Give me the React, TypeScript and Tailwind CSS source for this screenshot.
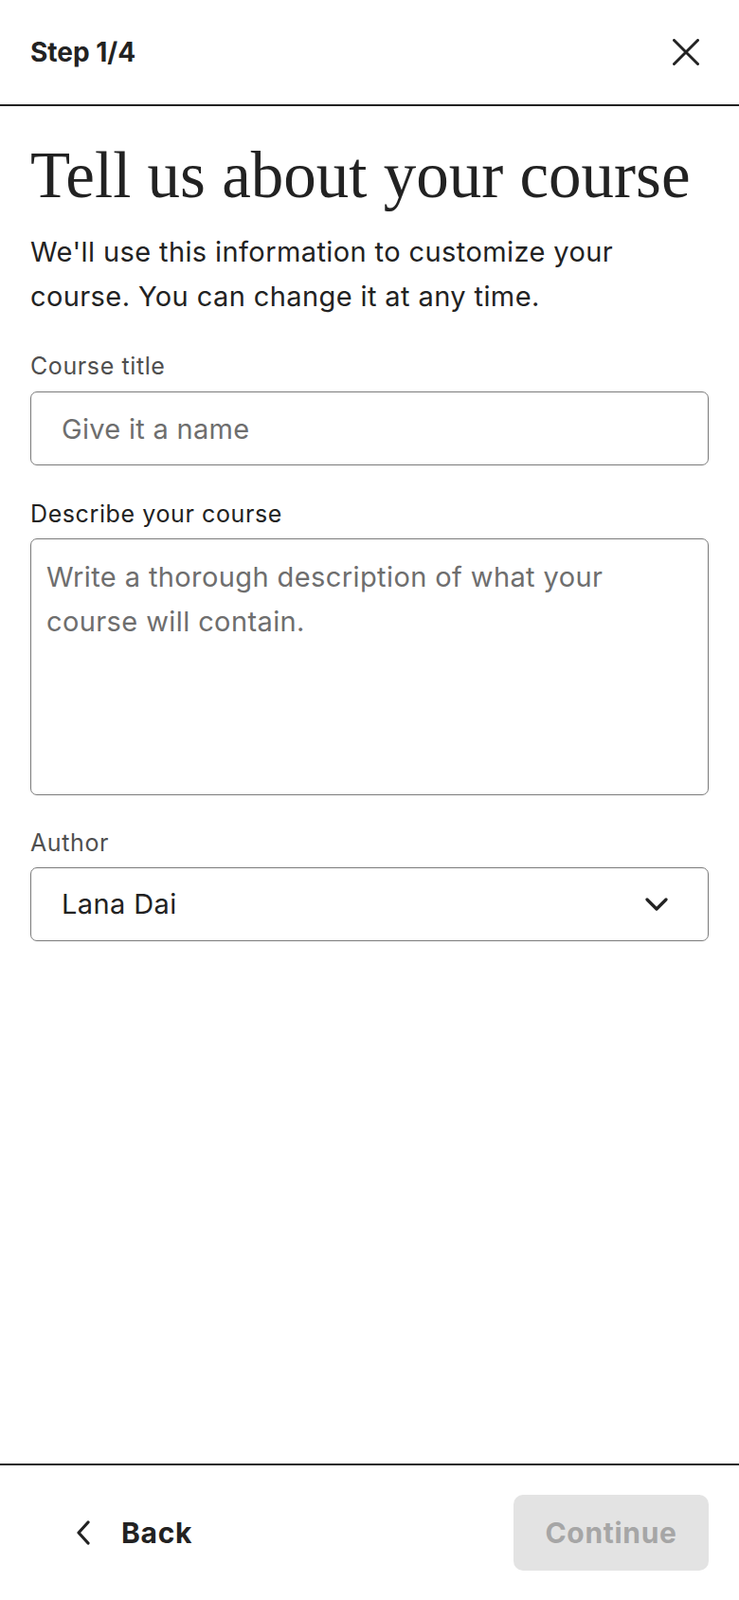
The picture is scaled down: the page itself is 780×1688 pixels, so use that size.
import { useState } from "react";

function CloseIcon() {
  return (
    <svg width="28" height="28" viewBox="0 0 28 28" fill="none" aria-hidden>
      <path d="M1.5 1.5L26.5 26.5M26.5 1.5L1.5 26.5" stroke="#222" strokeWidth="3" strokeLinecap="round" />
    </svg>
  );
}

function ChevronDown() {
  return (
    <svg width="24" height="14" viewBox="0 0 24 14" fill="none" aria-hidden>
      <path d="M2 2L12 12L22 2" stroke="#222" strokeWidth="3.2" strokeLinecap="round" strokeLinejoin="round" />
    </svg>
  );
}

function ChevronLeft() {
  return (
    <svg width="16" height="26" viewBox="0 0 16 26" fill="none" aria-hidden>
      <path d="M13 2L3 13L13 24" stroke="#222" strokeWidth="3.2" strokeLinecap="round" strokeLinejoin="round" />
    </svg>
  );
}

export default function App() {
  const [title, setTitle] = useState("");
  const [description, setDescription] = useState("");
  const [author, setAuthor] = useState("Lana Dai");

  const canContinue = title.trim().length > 0 && description.trim().length > 0;

  return (
    <div className="flex h-[1688px] flex-col bg-white font-[Inter,sans-serif] text-[#222]">
      {/* header */}
      <header className="flex h-[112px] shrink-0 items-center justify-between border-b-2 border-[#222] px-8">
        <span className="text-[28px] font-bold">Step 1/4</span>
        <button type="button" aria-label="Close" className="flex h-12 w-12 items-center justify-center">
          <CloseIcon />
        </button>
      </header>

      <main className="flex-1 px-8 pt-[35px]">
        <h1 className="font-['Liberation_Serif',serif] text-[69px] leading-[76px] font-normal">
          Tell us about your course
        </h1>
        <p className="mt-[19px] text-[29px] leading-[47px] tracking-[0.4px]">
          We'll use this information to customize your course. You can change it at any time.
        </p>

        <div className="mt-[34px]">
          <label htmlFor="course-title" className="mb-[11px] block text-[25px] leading-8 tracking-[0.6px] text-[#4f4f4f]">
            Course title
          </label>
          <input
            id="course-title"
            value={title}
            onChange={(e) => setTitle(e.target.value)}
            placeholder="Give it a name"
            className="block h-[78px] w-full rounded-[7px] border-[1.5px] border-[#7b7b7b] px-[32px] text-[29px] tracking-[0.3px] text-[#222] outline-none placeholder:text-[#6e6e6e]"
          />
        </div>

        <div className="mt-[35px]">
          <label htmlFor="course-desc" className="mb-[10px] block text-[25px] leading-8 tracking-[0.6px] text-[#222]">
            Describe your course
          </label>
          <textarea
            id="course-desc"
            value={description}
            onChange={(e) => setDescription(e.target.value)}
            placeholder="Write a thorough description of what your course will contain."
            className="block h-[271px] w-full resize-none rounded-[7px] border-[1.5px] border-[#7b7b7b] p-4 text-[29px] leading-[47px] tracking-[0.4px] text-[#222] outline-none placeholder:text-[#6e6e6e]"
          />
        </div>

        <div className="mt-[34px]">
          <label htmlFor="course-author" className="mb-[10px] block text-[25px] leading-8 tracking-[0.6px] text-[#4f4f4f]">
            Author
          </label>
          <div className="relative">
            <select
              id="course-author"
              value={author}
              onChange={(e) => setAuthor(e.target.value)}
              className="block h-[78px] w-full appearance-none rounded-[7px] border-[1.5px] border-[#7b7b7b] bg-white px-[32px] text-[29px] tracking-[0.4px] text-[#222] outline-none"
            >
              <option>Lana Dai</option>
            </select>
            <span className="pointer-events-none absolute top-1/2 right-[43px] -translate-y-1/2">
              <ChevronDown />
            </span>
          </div>
        </div>
      </main>

      {/* footer */}
      <footer className="flex h-[144px] shrink-0 items-center justify-between border-t-2 border-[#222] pr-8 pl-[80px]">
        <button type="button" className="flex items-center gap-[32px] text-[30px] font-bold tracking-[0.7px]">
          <ChevronLeft />
          Back
        </button>
        <button
          type="button"
          disabled={!canContinue}
          className="h-[80px] w-[206px] rounded-[10px] bg-[#222] text-[30px] font-bold tracking-[0.7px] text-white disabled:bg-[#e3e3e3] disabled:text-[#a6a6a6]"
        >
          Continue
        </button>
      </footer>
    </div>
  );
}
